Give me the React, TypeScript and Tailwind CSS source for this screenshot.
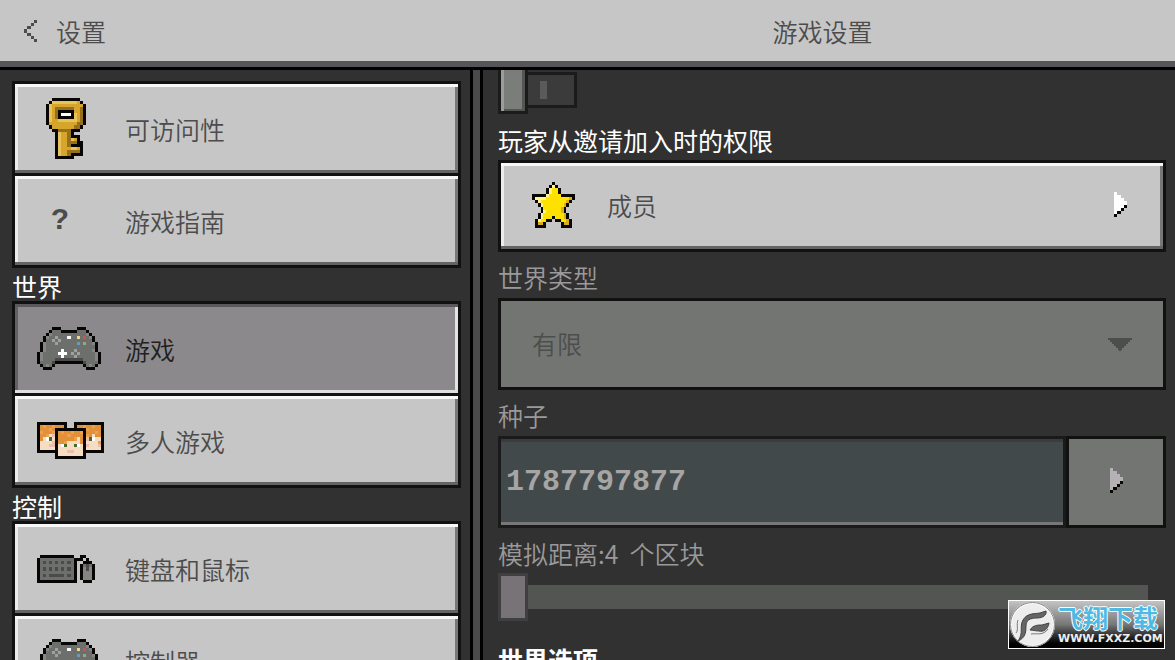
import { ReactNode, useState } from 'react';
import clsx from 'clsx';

interface PixelArtProps {
  rows: string[];
  className: string;
}

const palette: Record<string, string> = {
  B: '#080605',
  Y: '#d6a62c',
  L: '#e8c35c',
  D: '#97701b',
  g: '#6d6f6d',
  d: '#4a4b4a',
  l: '#a0a0a0',
  m: '#858683',
  W: '#ffffff',
  y: '#ead88a',
  r: '#c4565c',
  b: '#5c9fc4',
  e: '#8cae74',
  O: '#e3903b',
  o: '#efa04a',
  f: '#f6dcc0',
  p: '#eebcae',
  E: '#486b2b',
  S: '#ffe100',
  s: '#fff48f',
  t: '#dcae16',
  k: '#4c4c4c',
  A: '#b5b2b5',
};

const keyRows = [
  '.....BBBBBBBBB........',
  '....BLLLLLLLLYB.......',
  '...BLYYYYYYYYYYB......',
  '...BLYDDDDDDYYDB......',
  '...BLYDBBBBBYYDB......',
  '...BLYDBWWWBLYDB......',
  '...BLYDBBBBBLYDB......',
  '...BLYYLLLLLLYDB......',
  '...BYYYYYYYYYDDB......',
  '....BYYYYYYYDDB.......',
  '.....BBDDDDBBB........',
  '......BLYYDB..........',
  '......BLYYDBBB........',
  '......BLYYDLYB........',
  '......BLYYDDDBB.......',
  '......BLYYDBBBB.......',
  '......BLYYYLLYB.......',
  '......BLYYDDDDB.......',
  '......BLYYDBBBB.......',
  '......BBBBBB..........',
];

const controllerRows = [
  '.....BBB.....BBB......',
  '....BgggBBBBBgggB.....',
  '...BmgggggggggggmB....',
  '..BmgglgggWggygrgmB...',
  '..BgglglggggggggggB...',
  '.BmggglggggggbgeggmB..',
  '.BmggggggggggggggggB..',
  '.BmgggggWggglgggggmB..',
  'BmgggggWWWglglgggggmB.',
  'BmggggggWggglggggggmB.',
  'BmggggdddddddddggggmB.',
  'BggggdBBBBBBBBBdggggB.',
  '.BgmgB.........BgmgB..',
  '..BBB...........BBB...',
];

const keyboardRows = [
  '.BBBBBBBBBBB..BB......',
  'BgggggggggggBBB.B.....',
  'BgdgdgdgdgdgB..BBB....',
  'BgggggggggggB.BgdgB...',
  'BgdgdgdgdgdgB.BmdmB...',
  'BgggggggggggB.BmmmB...',
  'BgdgdddddgdgB.BmmmB...',
  'BgggggggggggB.BmmmB...',
  'BBBBBBBBBBBBB..BBB....',
];

const headsRows = [
  'BBBBBBBBBB..BBBBBBBBBB',
  'BOoOOoOOOB..BOOoOOoOOB',
  'BOOOoOBBBBBBBBBBoOOOOB',
  'BoOOOoBOoOOoOOoBOOOoOB',
  'BOOofpBOOOoOOOOBoOfOOB',
  'BOfWEfBOOOOOofOBpEWffB',
  'BffffpBOOoffffOBffffoB',
  'BfffppBfWEffEWfBpfffpB',
  'BfffffBffffffffBfffffB',
  'BBBBBBBfffppfffBBBBBBB',
  '......BffffffffB......',
  '......BBBBBBBBBB......',
];

const starRows = [
  '.......B.......',
  '......BsB......',
  '.....BsSSB.....',
  '.....BsSSB.....',
  'BBBBBsSSSSBBBBB',
  'BssssSSSSSSSStB',
  '.BsSSSSSSSSStB.',
  '..BsSSSSSSStB..',
  '...BSSSSSStB...',
  '...BsSSSSStB...',
  '..BsSSSSSSStB..',
  '..BsSSSBSSStB..',
  '.BsSSBB.BBSStB.',
  '.BttB.....BttB.',
  '.BBBB.....BBBB.',
];

const backRows = ['...k', '..k.', '.k..', 'k...', '.k..', '..k.', '...k'];
const arrowRows = ['W...', 'WW..', 'WWW.', 'WWWW', 'WWWB', 'WWB.', 'WB..', 'B...'];
const mutedArrowRows = arrowRows.map((row) => row.replace(/W/g, 'A'));

function PixelArt({ rows, className }: PixelArtProps) {
  return (
    <svg
      className={className}
      viewBox={`0 0 ${rows[0].length} ${rows.length}`}
      preserveAspectRatio="none"
      shapeRendering="crispEdges"
      aria-hidden="true"
    >
      {rows.map((row, y) =>
        [...row].map((cell, x) =>
          cell === '.' ? null : (
            <rect key={`${x}-${y}`} x={x} y={y} width={1} height={1} fill={palette[cell]} />
          )
        )
      )}
    </svg>
  );
}

interface MenuItem {
  id: string;
  label: string;
  icon: ReactNode;
}

const sections: { title?: string; items: MenuItem[] }[] = [
  {
    items: [
      { id: 'accessibility', label: '可访问性', icon: <PixelArt rows={keyRows} className="w-[67px] h-[61px]" /> },
      {
        id: 'guide',
        label: '游戏指南',
        icon: <span className="pl-[14px] font-['Liberation_Mono'] text-[30px] font-bold">?</span>,
      },
    ],
  },
  {
    title: '世界',
    items: [
      { id: 'game', label: '游戏', icon: <PixelArt rows={controllerRows} className="w-[67px] h-[43px]" /> },
      { id: 'multiplayer', label: '多人游戏', icon: <PixelArt rows={headsRows} className="w-[67px] h-[37px]" /> },
    ],
  },
  {
    title: '控制',
    items: [
      { id: 'keyboard', label: '键盘和鼠标', icon: <PixelArt rows={keyboardRows} className="w-[67px] h-[28px]" /> },
      { id: 'controller', label: '控制器', icon: <PixelArt rows={controllerRows} className="w-[67px] h-[43px]" /> },
    ],
  },
];

const raised =
  'bg-[#c6c6c6] shadow-[inset_0_3px_#f7f7f7,inset_0_-3px_#636363,inset_3px_0_#ececec,inset_-3px_0_#777777]';
const pressed =
  'bg-[#8c898c] shadow-[inset_0_3px_#5a585a,inset_0_-3px_#dedede,inset_3px_0_#626062,inset_-3px_0_#e4e4e4]';

function Watermark() {
  return (
    <div className="absolute right-[10px] bottom-[11px] flex h-[49px] w-[157px] items-center gap-[3px] border border-white bg-linear-to-b from-[#c4c4c4] via-[#777777] to-black pl-px">
      <svg className="h-[45px] w-[45px] shrink-0" viewBox="0 0 45 45" aria-hidden="true">
        <circle cx="22.5" cy="22.5" r="21.5" fill="#ededed" stroke="#fafafa" strokeWidth="2" />
        <circle cx="22.5" cy="22.5" r="22" fill="none" stroke="#8b8b8b" />
        <path
          d="M8 39C14 31 9 25 13 18c4-7 11-6 17-7l6-2c1 4-3 7-9 7-7 0-11 2-11 8 0 7-1 12-8 15Z"
          fill="#666666"
          stroke="#444444"
        />
        <path d="M20 28c3-5 8-5 12-5l7-2c-1 7-6 9-10 8-4 0-6-1-9-1Z" fill="#666666" stroke="#444444" />
        <path d="M6 31c3-4 0-8 2-13M21 32c6-1 12 2 17-5" fill="none" stroke="#777777" />
      </svg>
      <div className="whitespace-nowrap">
        <div className="text-[25px] leading-[29px] font-bold text-[#4fb9e2] [text-shadow:1px_0_#fff,-1px_0_#fff,0_1px_#fff,0_-1px_#fff]">
          飞翔下载
        </div>
        <div className="font-['DejaVu_Sans'] text-[11px] leading-[14px] font-bold text-[#eeeeee]">WWW.FXXZ.COM</div>
      </div>
    </div>
  );
}

export default function App() {
  const [active, setActive] = useState('game');
  const [allowed, setAllowed] = useState(false);
  const [distance, setDistance] = useState(4);

  return (
    <div className="relative flex h-screen flex-col overflow-hidden bg-[#313131] font-['Noto_Sans_CJK_SC',sans-serif] text-[25px] leading-[36px] font-[350] text-[#4c4c4c]">
      <header className="flex h-[67px] shrink-0 items-center border-b-6 border-[#58555a] bg-[#c6c6c6]">
        <div className="w-2/5 pl-6">
          <button type="button" className="flex items-center gap-[19px]">
            <PixelArt rows={backRows} className="h-[22px] w-[13px]" />
            设置
          </button>
        </div>
        <h1 className="flex-1 text-center font-[350]">游戏设置</h1>
      </header>

      <main className="flex min-h-0 flex-1 border-t-3 border-black">
        <nav className="w-2/5 overflow-hidden pt-[14px] pr-[9px] pl-3">
          {sections.map((section) => (
            <section key={section.items[0].id}>
              {section.title && <h2 className="h-[36px] font-normal text-white">{section.title}</h2>}
              {section.items.map((item) => (
                <button
                  key={item.id}
                  type="button"
                  onClick={() => setActive(item.id)}
                  className={clsx(
                    '-mt-[3px] flex h-[95px] w-full items-center border-3 border-[#111111] pl-[22px] text-left',
                    active === item.id ? pressed : raised,
                    active === item.id && 'text-[#202020]'
                  )}
                >
                  <span className="flex w-[67px] shrink-0">{item.icon}</span>
                  <span className="pl-[21px]">{item.label}</span>
                </button>
              ))}
            </section>
          ))}
        </nav>

        <div className="w-[13px] shrink-0 border-x-3 border-black bg-[#4a4a4a]" />

        <div className="min-w-0 flex-1 overflow-hidden pr-[9px] pl-[15px]">
          <label className="-mt-1 flex h-[48px] w-[79px] items-center">
            <input
              type="checkbox"
              aria-label="启用"
              checked={allowed}
              onChange={(e) => setAllowed(e.target.checked)}
              className="peer sr-only"
            />
            <span className="h-[48px] w-[30px] border-3 border-[#1b1b1b] bg-[#7b7d7b] shadow-[inset_3px_0_#9c9c9c,inset_-3px_0_#555555,inset_0_-2px_#555555] peer-checked:order-2" />
            <span className="flex h-[36px] flex-1 items-center border-3 border-l-0 border-[#1b1b1b] bg-[#3b3b3b] pl-3">
              <span className="h-[18px] w-[7px] bg-[#5a5a5a]" />
            </span>
          </label>

          <h2 className="pt-2 pb-0.5 font-normal text-white">玩家从邀请加入时的权限</h2>
          <button
            type="button"
            className={clsx(
              'flex h-[92px] w-full items-center border-3 border-[#111111] pr-[36px] pb-[3px] pl-[31px]',
              raised
            )}
          >
            <PixelArt rows={starRows} className="h-[46px] w-[43px]" />
            <span className="flex-1 pl-[32px] text-left">成员</span>
            <PixelArt rows={arrowRows} className="h-[25px] w-[13px]" />
          </button>

          <label htmlFor="world-type" className="block pt-[7px] pb-[3px] text-[#9b999b]">
            世界类型
          </label>
          <div className="relative">
            <select
              id="world-type"
              disabled
              className="block h-[92px] w-full appearance-none border-3 border-[#111111] bg-[#737573] pb-[3px] pl-[31px] text-[#4c4e4c] opacity-100"
            >
              <option>有限</option>
            </select>
            <svg
              className="absolute top-[40px] right-[34px] h-[13px] w-[24px]"
              viewBox="0 0 24 13"
              shapeRendering="crispEdges"
              aria-hidden="true"
            >
              <path d="M0 0h24v2h-2v2h-2v2h-2v2h-2v2h-2v2h-1v1h-2v-1h-1v-2H8V8H6V6H4V4H2V2H0Z" fill="#4c4e4a" />
            </svg>
          </div>

          <label htmlFor="seed" className="block pt-[7px] pb-[3px] text-[#9b999b]">
            种子
          </label>
          <div className="flex h-[92px]">
            <input
              id="seed"
              readOnly
              value="1787797877"
              className="min-w-0 flex-1 border-3 border-[#1a1a1a] bg-[#42494a] pl-[5px] font-['Liberation_Mono'] text-[30px] font-bold text-[#a5a5a5] shadow-[inset_0_3px_#3c3c3c,inset_0_-3px_#777777] outline-none"
            />
            <button
              type="button"
              aria-label="选择种子"
              className="flex w-[100px] items-center justify-center border-3 border-[#111111] bg-[#737573] pb-[3px]"
            >
              <PixelArt rows={mutedArrowRows} className="h-[25px] w-[13px]" />
            </button>
          </div>

          <label htmlFor="distance" className="block pt-[7px] pb-[2px] text-[#9b999b]">
            模拟距离:{distance}&nbsp; 个区块
          </label>
          <input
            id="distance"
            type="range"
            min={4}
            max={12}
            value={distance}
            onChange={(e) => setDistance(Number(e.target.value))}
            className="block h-[48px] w-[calc(100%-18px)] appearance-none bg-[linear-gradient(#525552,#525552)] bg-[length:100%_24px] bg-center bg-no-repeat [&::-webkit-slider-thumb]:h-[48px] [&::-webkit-slider-thumb]:w-[30px] [&::-webkit-slider-thumb]:appearance-none [&::-webkit-slider-thumb]:border-3 [&::-webkit-slider-thumb]:border-[#3f3f3f] [&::-webkit-slider-thumb]:bg-[#777377]"
          />

          <h2 className="pt-5 font-bold text-white">世界选项</h2>
        </div>
      </main>

      <Watermark />
    </div>
  );
}
